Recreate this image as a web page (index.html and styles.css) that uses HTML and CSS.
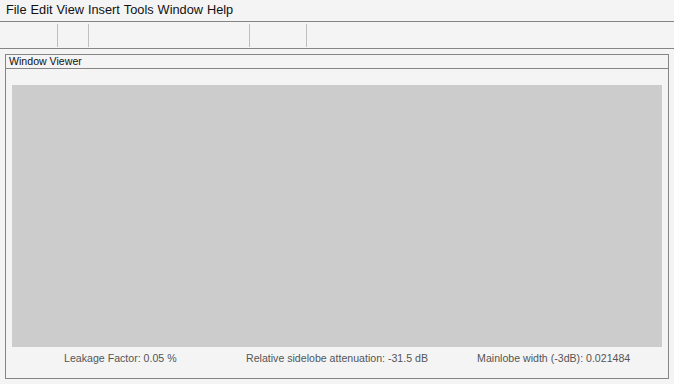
FILE: index.html
```html
<!DOCTYPE html>
<html lang="en">
<head>
    <meta charset="UTF-8">
    <title>Window Viewer</title>
    <link rel="stylesheet" href="styles.css">
</head>
<body>

<div class="menubar">
    <span class="menu-item">File</span>
    <span class="menu-item">Edit</span>
    <span class="menu-item">View</span>
    <span class="menu-item">Insert</span>
    <span class="menu-item">Tools</span>
    <span class="menu-item">Window</span>
    <span class="menu-item">Help</span>
</div>

<div class="toolbar">
    <div class="tool-group g1"></div>
    <div class="tool-group g2"></div>
    <div class="tool-group g3"></div>
    <div class="tool-group g4"></div>
</div>

<div class="panel">
    <div class="panel-title">Window Viewer</div>
    <div class="panel-body">
        <div class="plot-area"></div>
        <div class="stats">
            <span>Leakage Factor: 0.05 %</span>
            <span>Relative sidelobe attenuation: -31.5 dB</span>
            <span>Mainlobe width (-3dB): 0.021484</span>
        </div>
    </div>
</div>

</body>
</html>
```

FILE: styles.css
```css
body {
    font-family: "Liberation Sans", Arial, sans-serif;
    margin: 0;
    background: #f4f4f4;
    width: 674px;
    height: 384px;
    overflow: hidden;
}

.menubar {
    display: flex;
    height: 21px;
    padding-left: 6px;
    border-bottom: 1px solid #858585;
    font-size: 12.75px;
    line-height: 20px;
    color: #111;
}

.menu-item {
    margin-right: 4px;
}

.toolbar {
    display: flex;
    height: 26px;
    border-bottom: 1px solid #858585;
}

.tool-group {
    margin-top: 2px;
    height: 23px;
    border-right: 1px solid #bfbfbf;
}

.g1 { width: 57px; }
.g2 { width: 30px; }
.g3 { width: 160px; }
.g4 { width: 56px; }

.panel {
    margin: 5px 0 0 5px;
    width: 662px;
    height: 323px;
    border: 1px solid #858585;
}

.panel-title {
    height: 13px;
    padding-left: 3px;
    border-bottom: 1px solid #858585;
    font-size: 10.6px;
    line-height: 13px;
    color: #111;
}

.panel-body {
    padding: 16px 6px 0 6px;
}

.plot-area {
    height: 262px;
    background: #cccccc;
}

.stats {
    display: grid;
    grid-template-columns: 1fr 1fr 1fr;
    margin-top: 5px;
    font-size: 10.6px;
    line-height: 13px;
    color: #555;
    text-align: center;
}
```
